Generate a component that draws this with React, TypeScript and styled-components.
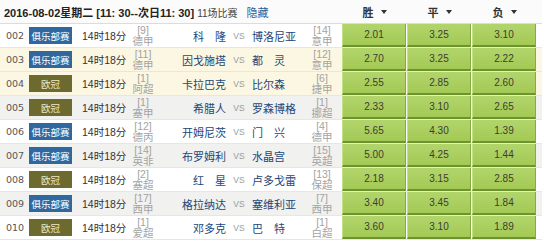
import React from "react";
import styled, { createGlobalStyle } from "styled-components";

const GlobalStyle = createGlobalStyle`
  body {
    margin: 0;
    background: #fff;
    font-family: "Liberation Sans", "Noto Sans CJK SC", sans-serif;
  }
`;

type Kind = "club" | "ucl";
type Tone = "white" | "yellow" | "grey";

interface Match {
  no: string;
  kind: Kind;
  homeRank: string;
  homeLeague: string;
  home: string;
  away: string;
  awayRank: string;
  awayLeague: string;
  odds: [string, string, string];
  tone: Tone;
}

const matches: Match[] = [
  { no: "002", kind: "club", homeRank: "[9]", homeLeague: "德甲", home: "科　隆", away: "博洛尼亚", awayRank: "[14]", awayLeague: "意甲", odds: ["2.01", "3.25", "3.10"], tone: "white" },
  { no: "003", kind: "club", homeRank: "[11]", homeLeague: "德甲", home: "因戈施塔", away: "都　灵", awayRank: "[12]", awayLeague: "意甲", odds: ["2.70", "3.25", "2.22"], tone: "yellow" },
  { no: "004", kind: "ucl", homeRank: "[1]", homeLeague: "阿超", home: "卡拉巴克", away: "比尔森", awayRank: "[6]", awayLeague: "捷甲", odds: ["2.55", "2.85", "2.60"], tone: "yellow" },
  { no: "005", kind: "ucl", homeRank: "[1]", homeLeague: "塞甲", home: "希腊人", away: "罗森博格", awayRank: "[1]", awayLeague: "挪超", odds: ["2.33", "3.10", "2.65"], tone: "grey" },
  { no: "006", kind: "club", homeRank: "[12]", homeLeague: "德丙", home: "开姆尼茨", away: "门　兴", awayRank: "[4]", awayLeague: "德甲", odds: ["5.65", "4.30", "1.39"], tone: "white" },
  { no: "007", kind: "club", homeRank: "[14]", homeLeague: "英非", home: "布罗姆利", away: "水晶宫", awayRank: "[15]", awayLeague: "英超", odds: ["5.00", "4.25", "1.44"], tone: "grey" },
  { no: "008", kind: "ucl", homeRank: "[2]", homeLeague: "塞超", home: "红　星", away: "卢多戈雷", awayRank: "[13]", awayLeague: "保超", odds: ["2.18", "3.15", "2.85"], tone: "white" },
  { no: "009", kind: "club", homeRank: "[17]", homeLeague: "西甲", home: "格拉纳达", away: "塞维利亚", awayRank: "[7]", awayLeague: "西甲", odds: ["3.40", "3.45", "1.84"], tone: "grey" },
  { no: "010", kind: "ucl", homeRank: "[1]", homeLeague: "爱超", home: "邓多克", away: "巴　特", awayRank: "[1]", awayLeague: "白超", odds: ["3.60", "3.10", "1.89"], tone: "white" },
];

const toneColors: Record<Tone, string> = {
  white: "#ffffff",
  yellow: "#fcf7e2",
  grey: "#f1f1ef",
};

const Board = styled.div`
  width: 542px;
  height: 240px;
  overflow: hidden;
`;

const HeadBar = styled.div`
  height: 23px;
  display: flex;
  align-items: center;
  border-bottom: 1px solid #dcdcdc;
  background: #fbfbfb;
`;

const HeadInfo = styled.div`
  width: 342px;
  box-sizing: border-box;
  padding-left: 4px;
  display: flex;
  align-items: baseline;
  white-space: nowrap;
`;

const Title = styled.span`
  font-weight: bold;
  font-size: 11px;
  color: #222;
`;

const Count = styled.span`
  font-size: 10px;
  color: #444;
  margin-left: 3px;
`;

const HideLink = styled.a`
  font-size: 11px;
  color: #2a5d9a;
  margin-left: 9px;
  cursor: pointer;
`;

const OddsHead = styled.div`
  display: flex;
`;

const SortHead = styled.div`
  width: 65px;
  display: flex;
  align-items: center;
  justify-content: center;
  gap: 7px;
  font-size: 11px;
  font-weight: bold;
  color: #333;
`;

const Caret = styled.span`
  width: 0;
  height: 0;
  border-left: 3px solid transparent;
  border-right: 3px solid transparent;
  border-top: 4px solid #333;
`;

const Row = styled.div<{ $tone: Tone }>`
  height: 23px;
  display: flex;
  align-items: center;
  background: ${(p) => toneColors[p.$tone]};
  border-bottom: 1px solid #e6e6e2;
`;

const Num = styled.span`
  width: 29px;
  box-sizing: border-box;
  padding-left: 6px;
  font-family: "DejaVu Sans", sans-serif;
  font-size: 9.5px;
  color: #555;
`;

const Badge = styled.span<{ $kind: Kind }>`
  width: 43px;
  height: 17px;
  display: flex;
  align-items: center;
  justify-content: center;
  font-size: 9.5px;
  color: ${(p) => (p.$kind === "club" ? "#ffffff" : "#ece8c8")};
  background: ${(p) => (p.$kind === "club" ? "#2f679e" : "#6c6a2f")};
`;

const Time = styled.span`
  width: 49px;
  margin-left: 10px;
  font-size: 10.5px;
  color: #333;
`;

const Rank = styled.span`
  width: 24px;
  display: flex;
  flex-direction: column;
  align-items: center;
  font-size: 10.5px;
  line-height: 11px;
  color: #a3a3a3;
`;

const Team = styled.span<{ $side: "home" | "away" }>`
  width: ${(p) => (p.$side === "home" ? "71px" : "58px")};
  text-align: ${(p) => (p.$side === "home" ? "right" : "left")};
  font-size: 11px;
  color: #1c4678;
  white-space: nowrap;
`;

const Vs = styled.span`
  width: 26px;
  text-align: center;
  font-size: 8.5px;
  color: #9a9a9a;
`;

const OddsGroup = styled.div`
  display: flex;
  align-self: stretch;
  margin-left: 8px;
`;

const OddsCell = styled.div`
  width: 64px;
  margin-right: 1px;
  box-sizing: border-box;
  display: flex;
  align-items: center;
  justify-content: center;
  background: linear-gradient(#b2d56b, #a3c955);
  border-left: 1px solid #c3df88;
  border-right: 1px solid #86ab40;
  border-bottom: 2px solid #6e922f;
  font-size: 10px;
  color: #3d3d33;
`;

export default function App() {
  return (
    <Board>
      <GlobalStyle />
      <HeadBar>
        <HeadInfo>
          <Title>2016-08-02星期二 [11: 30--次日11: 30]</Title>
          <Count>11场比赛</Count>
          <HideLink>隐藏</HideLink>
        </HeadInfo>
        <OddsHead>
          {["胜", "平", "负"].map((h) => (
            <SortHead key={h}>
              {h}
              <Caret />
            </SortHead>
          ))}
        </OddsHead>
      </HeadBar>
      {matches.map((m) => (
        <Row key={m.no} $tone={m.tone}>
          <Num>{m.no}</Num>
          <Badge $kind={m.kind}>{m.kind === "club" ? "俱乐部赛" : "欧冠"}</Badge>
          <Time>14时18分</Time>
          <Rank>
            <span>{m.homeRank}</span>
            <span>{m.homeLeague}</span>
          </Rank>
          <Team $side="home">{m.home}</Team>
          <Vs>VS</Vs>
          <Team $side="away">{m.away}</Team>
          <Rank>
            <span>{m.awayRank}</span>
            <span>{m.awayLeague}</span>
          </Rank>
          <OddsGroup>
            {m.odds.map((o, i) => (
              <OddsCell key={i}>{o}</OddsCell>
            ))}
          </OddsGroup>
        </Row>
      ))}
    </Board>
  );
}
